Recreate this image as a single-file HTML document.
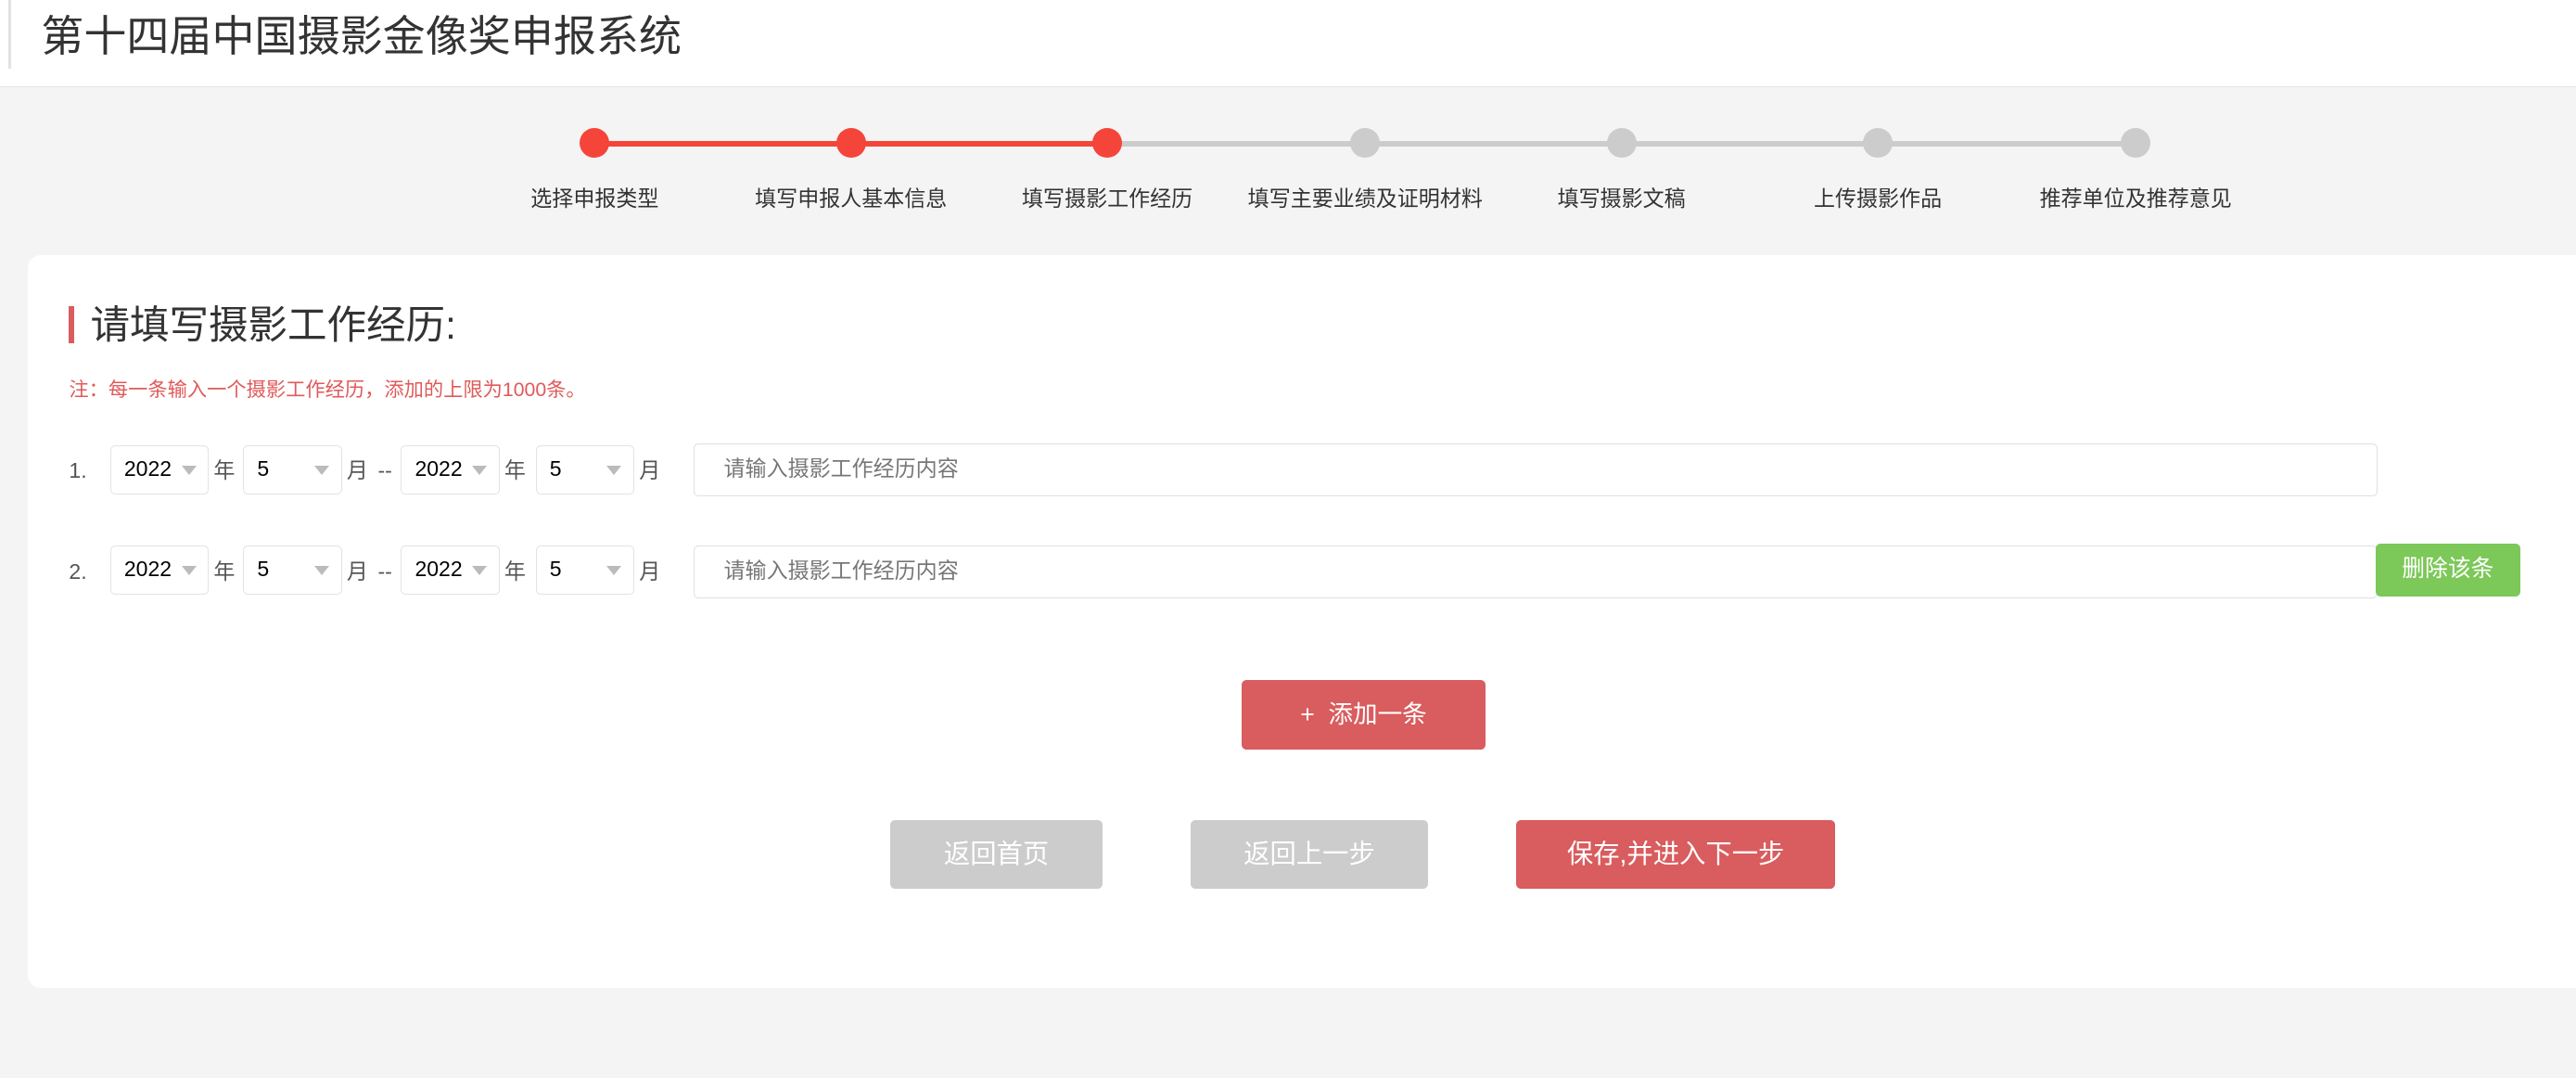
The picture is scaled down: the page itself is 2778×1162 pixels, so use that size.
<!DOCTYPE html>
<html><head><meta charset="utf-8">
<style>
html,body{margin:0;padding:0;}
body{width:1568px;height:656px;zoom:1.7717;background:#f4f4f4;position:relative;overflow:hidden;font-family:"Liberation Sans","Noto Sans CJK SC",sans-serif;color:#333;}
.abs{position:absolute;}
.hdr{left:0;top:0;width:1568px;height:53px;background:#fff;border-bottom:1px solid #e6e6e6;box-sizing:border-box;}
.vl{left:5px;top:0;width:2px;height:42px;background:#e2e2e2;}
.title{left:25px;top:5px;font-size:26px;line-height:34px;color:#333;}
.line{height:3px;top:86px;}
.dot{width:18px;height:18px;border-radius:50%;top:78px;}
.lbl{top:113px;font-size:13px;line-height:16px;width:160px;text-align:center;color:#333;}
.card{left:17px;top:155px;width:1580px;height:446px;background:#fff;border-radius:8px;}
.bar{left:42px;top:186px;width:3px;height:23px;background:#d95c5e;}
.h2{left:55px;top:183px;font-size:24px;line-height:32px;color:#333;}
.note{left:42px;top:229px;font-size:12px;line-height:16px;color:#e05a5a;}
.sel{height:30px;border:1px solid #e3e3e3;border-radius:3px;box-sizing:border-box;background:#fff;font-size:13px;line-height:28px;color:#000;padding-left:8px;}
.sel:after{content:"";position:absolute;right:7px;top:12px;border-left:5px solid transparent;border-right:5px solid transparent;border-top:6px solid #bbb;}
.t{font-size:13px;line-height:16px;color:#555;}
.inp{height:32px;border:1px solid #e0e0e0;border-radius:3px;box-sizing:border-box;background:#fff;font-size:13px;line-height:30px;color:#777;padding-left:18px;}
.btn{color:#fff;text-align:center;border-radius:3px;}
</style></head><body>
<div class="abs hdr"></div>
<div class="abs vl"></div>
<div class="abs title">第十四届中国摄影金像奖申报系统</div>

<div class="abs line" style="left:362px;width:312px;background:#f5453a;"></div>
<div class="abs line" style="left:674px;width:626px;background:#cccccc;"></div>
<div class="abs dot" style="left:353px;background:#f5453a;"></div>
<div class="abs dot" style="left:509px;background:#f5453a;"></div>
<div class="abs dot" style="left:665px;background:#f5453a;"></div>
<div class="abs dot" style="left:822px;background:#ccc;"></div>
<div class="abs dot" style="left:978px;background:#ccc;"></div>
<div class="abs dot" style="left:1134px;background:#ccc;"></div>
<div class="abs dot" style="left:1291px;background:#ccc;"></div>
<div class="abs lbl" style="left:282px;">选择申报类型</div>
<div class="abs lbl" style="left:438px;">填写申报人基本信息</div>
<div class="abs lbl" style="left:594px;">填写摄影工作经历</div>
<div class="abs lbl" style="left:751px;">填写主要业绩及证明材料</div>
<div class="abs lbl" style="left:907px;">填写摄影文稿</div>
<div class="abs lbl" style="left:1063px;">上传摄影作品</div>
<div class="abs lbl" style="left:1220px;">推荐单位及推荐意见</div>

<div class="abs card"></div>
<div class="abs bar"></div>
<div class="abs h2">请填写摄影工作经历:</div>
<div class="abs note">注：每一条输入一个摄影工作经历，添加的上限为1000条。</div>

<!-- row 1 -->
<div class="abs t" style="left:42px;top:278px;">1.</div>
<div class="abs sel" style="left:67px;top:271px;width:60px;">2022</div>
<div class="abs t" style="left:130px;top:278px;">年</div>
<div class="abs sel" style="left:148px;top:271px;width:60px;">5</div>
<div class="abs t" style="left:211px;top:278px;">月</div>
<div class="abs t" style="left:230px;top:278px;">--</div>
<div class="abs sel" style="left:244px;top:271px;width:60px;">2022</div>
<div class="abs t" style="left:307px;top:278px;">年</div>
<div class="abs sel" style="left:326px;top:271px;width:60px;">5</div>
<div class="abs t" style="left:389px;top:278px;">月</div>
<div class="abs inp" style="left:422px;top:270px;width:1025px;">请输入摄影工作经历内容</div>

<!-- row 2 -->
<div class="abs t" style="left:42px;top:340px;">2.</div>
<div class="abs sel" style="left:67px;top:332px;width:60px;">2022</div>
<div class="abs t" style="left:130px;top:340px;">年</div>
<div class="abs sel" style="left:148px;top:332px;width:60px;">5</div>
<div class="abs t" style="left:211px;top:340px;">月</div>
<div class="abs t" style="left:230px;top:340px;">--</div>
<div class="abs sel" style="left:244px;top:332px;width:60px;">2022</div>
<div class="abs t" style="left:307px;top:340px;">年</div>
<div class="abs sel" style="left:326px;top:332px;width:60px;">5</div>
<div class="abs t" style="left:389px;top:340px;">月</div>
<div class="abs inp" style="left:422px;top:332px;width:1025px;">请输入摄影工作经历内容</div>
<div class="abs btn" style="left:1446px;top:331px;width:88px;height:32px;line-height:32px;font-size:14px;background:#7cc858;">删除该条</div>

<div class="abs btn" style="left:756px;top:414px;width:148px;height:42px;line-height:42px;font-size:15px;background:#d95c5e;">+&nbsp; 添加一条</div>

<div class="abs btn" style="left:542px;top:499px;width:129px;height:42px;line-height:42px;font-size:16px;background:#cccccc;">返回首页</div>
<div class="abs btn" style="left:725px;top:499px;width:144px;height:42px;line-height:42px;font-size:16px;background:#cccccc;">返回上一步</div>
<div class="abs btn" style="left:923px;top:499px;width:194px;height:42px;line-height:42px;font-size:16px;background:#d95c5e;">保存,并进入下一步</div>
</body></html>
